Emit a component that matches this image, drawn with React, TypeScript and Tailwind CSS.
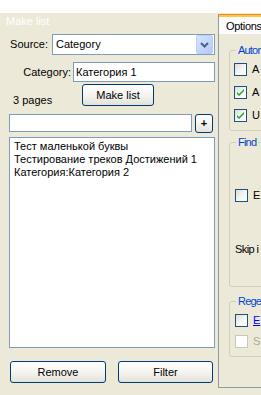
import React from "react";

const font = { fontFamily: '"Liberation Sans", Arial, sans-serif' };

function XpButton({ label, className }: { label: string; className: string }) {
  return (
    <button
      className={`flex items-center justify-center rounded-[3px] border border-[#003C74] bg-gradient-to-b from-white via-[#F5F4EF] to-[#E3E2DA] text-[11px] leading-[13px] text-black ${className}`}
    >
      {label}
    </button>
  );
}

function CheckBox({ checked, disabled }: { checked?: boolean; disabled?: boolean }) {
  if (disabled) {
    return <span className="block h-[13px] w-[13px] shrink-0 border border-[#CAC8BB] bg-white" />;
  }
  return (
    <span className="flex h-[13px] w-[13px] shrink-0 items-center justify-center border border-[#1C5180] bg-gradient-to-br from-[#DCDCD7] via-[#F4F4F0] to-white">
      {checked && (
        <svg width="7" height="7" viewBox="0 0 7 7">
          <path d="M0 3 L2 5 L7 0 L7 2 L2 7 L0 5 Z" fill="#21A121" />
        </svg>
      )}
    </span>
  );
}

function Group({ title, className, children }: { title: string; className: string; children: React.ReactNode }) {
  return (
    <fieldset className={`w-[200px] rounded-[3px] border border-[#D0D0BF] pl-[4px] ${className}`}>
      <legend className="ml-[2px] px-[2px] text-[11px] leading-[13px] tracking-[-0.8px] text-[#0046D5]">{title}</legend>
      {children}
    </fieldset>
  );
}

export default function App() {
  return (
    <div className="h-[395px] w-[261px] overflow-hidden bg-white text-[11px] leading-[13px] text-black" style={font}>
      <div className="h-[13px] bg-white" />
      <div className="flex h-[382px] bg-[#ECE9D8]">
        {/* left: make list */}
        <div className="flex w-[218px] shrink-0 flex-col">
          <div className="mt-[2px] h-[13px] pl-[6px] text-white">Make list</div>

          <div className="mt-[6px] flex h-[21px] items-center">
            <span className="w-[48px] whitespace-nowrap text-right">Source:</span>
            <div className="ml-[4px] flex h-[21px] w-[163px] items-center border border-[#7F9DB9] bg-white">
              <span className="flex-1 pl-[3px]">Category</span>
              <span className="mr-[1px] flex h-[19px] w-[17px] items-center justify-center rounded-[2px] border border-[#B9CDF8] bg-gradient-to-br from-[#D8E4FD] to-[#B4C9F8]">
                <svg width="9" height="6" viewBox="0 0 9 6">
                  <path d="M1 1 L4.5 4.5 L8 1" stroke="#4D6185" strokeWidth="2" fill="none" />
                </svg>
              </span>
            </div>
          </div>

          <div className="mt-[7px] flex h-[20px] items-center">
            <span className="w-[71px] whitespace-nowrap text-right">Category:</span>
            <div className="ml-[2px] flex h-[20px] w-[142px] items-center border border-[#7F9DB9] bg-white pl-[2px]">
              Категория 1
            </div>
          </div>

          <div className="mt-[2px] flex h-[22px] items-start">
            <span className="ml-[13px] mt-[10px] w-[69px]">3 pages</span>
            <XpButton label="Make list" className="h-[22px] w-[72px]" />
          </div>

          <div className="mt-[8px] flex h-[19px] items-start">
            <div className="ml-[9px] h-[18px] w-[183px] border border-[#7F9DB9] bg-white" />
            <XpButton label="+" className="ml-[3px] h-[19px] w-[18px] font-bold" />
          </div>

          <div className="ml-[9px] mt-[4px] h-[211px] w-[206px] border border-[#7F9DB9] bg-white pl-[4px] pt-[2px]">
            <div>Тест маленькой буквы</div>
            <div>Тестирование треков Достижений 1</div>
            <div>Категория:Категория 2</div>
          </div>

          <div className="mt-[13px] flex">
            <XpButton label="Remove" className="ml-[10px] h-[22px] w-[96px]" />
            <XpButton label="Filter" className="ml-[12px] h-[22px] w-[95px]" />
          </div>
        </div>

        {/* right: options tab */}
        <div className="flex w-[220px] shrink-0 flex-col">
          <div className="mt-[1px] h-[20px] border-l border-[#919B9C] bg-[#FCFCFE]">
            <div className="h-[1px] bg-[#E68B2C]" />
            <div className="h-[2px] bg-[#FFC83C]" />
            <div className="pl-[7px] pt-[3px] tracking-[-0.3px]">Options</div>
          </div>
          <div className="flex h-[354px] flex-col border-b border-l border-[#919B9C] bg-[#ECE9D8] pl-[10px]">
            <Group title="Autom" className="mt-[10px] pb-[8px]">
              <div className="mt-[6px] flex flex-col gap-[10px]">
                <div className="flex items-center gap-[5px]">
                  <CheckBox />
                  <span>A</span>
                </div>
                <div className="flex items-center gap-[5px]">
                  <CheckBox checked />
                  <span>A</span>
                </div>
                <div className="flex items-center gap-[5px]">
                  <CheckBox checked />
                  <span>U</span>
                </div>
              </div>
            </Group>

            <Group title="Find" className="mt-[5px] pb-[30px]">
              <div className="mt-[40px] flex items-center gap-[5px] pl-[1px]">
                <CheckBox />
                <span>E</span>
              </div>
              <div className="mt-[41px] pl-[1px] tracking-[-0.6px]">Skip i</div>
            </Group>

            <Group title="Rege" className="mt-[8px] pb-[8px]">
              <div className="mt-[6px] flex flex-col gap-[8px] pl-[1px]">
                <div className="flex items-center gap-[5px]">
                  <CheckBox />
                  <span className="text-[#0000FF] underline">E</span>
                </div>
                <div className="flex items-center gap-[5px]">
                  <CheckBox disabled />
                  <span className="text-[#ACA899]">S</span>
                </div>
              </div>
            </Group>
          </div>
        </div>
      </div>
    </div>
  );
}
